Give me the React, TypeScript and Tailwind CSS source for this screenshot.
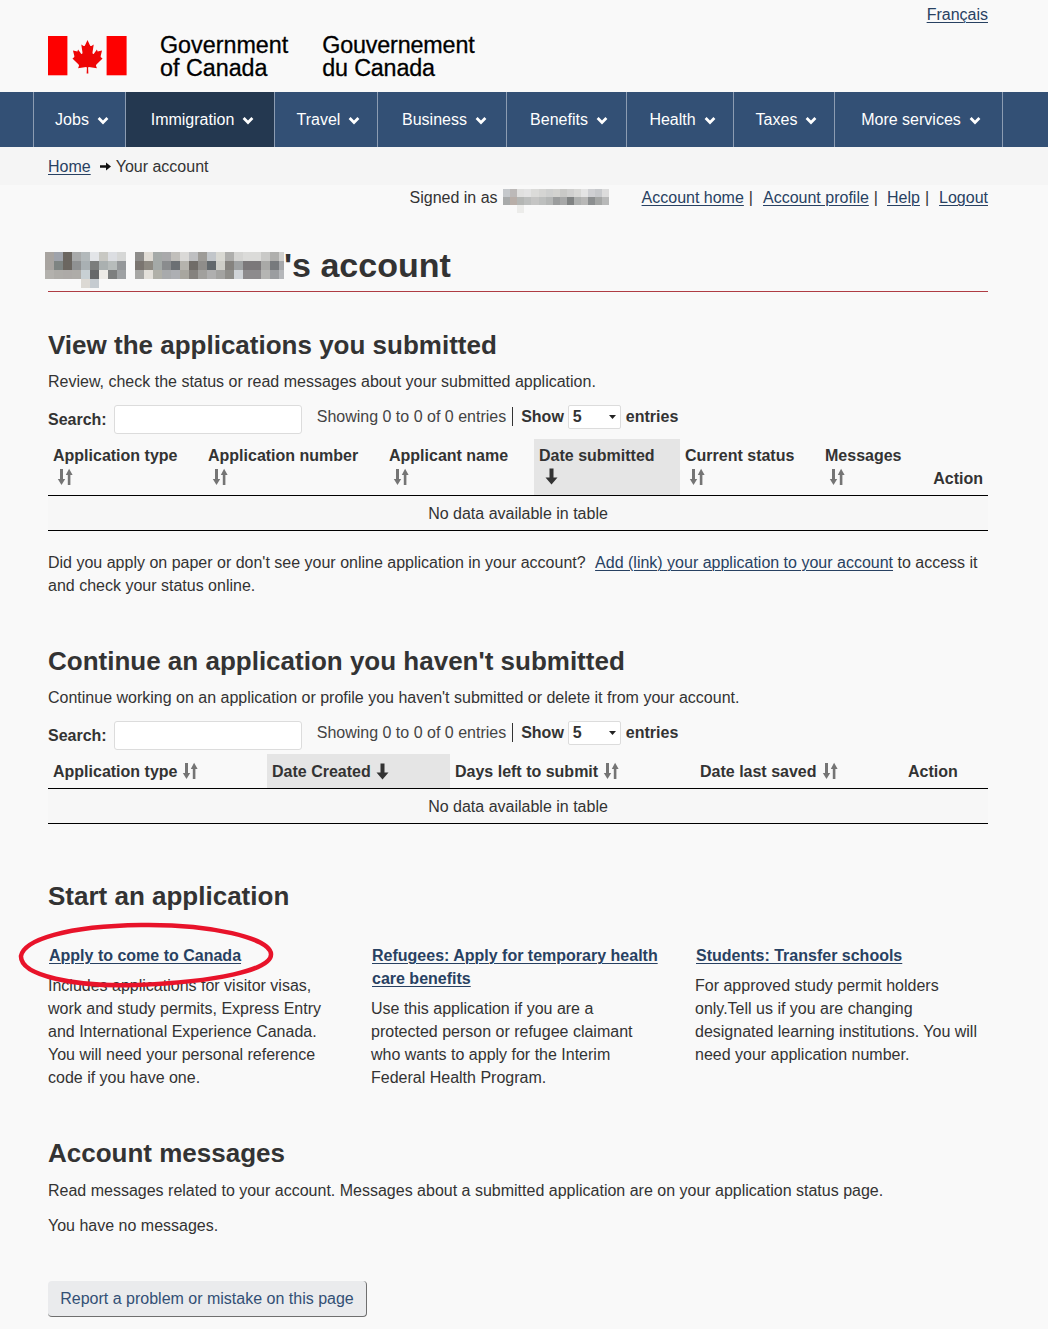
import React from "react";

const titleRows = [
  ["#a8a4a0","#9fa3ab","#6b6660","#a8aaaa","#b3b9bb","#e3e5e8","#c8c8c3","#dcdee2","#d6d7d6","#f9f9f9","#8e8d8b","#e0dcd5","#a5aaa8","#a9a9ab","#c1bfbb","#dad9d7","#bebfc1","#9e9c98","#c2c6ca","#d9d9d3","#aeaeac","#d4d4d2","#dbdbd9","#dbdbd9","#c9c9c7","#afafad","#cfcfcd"],
  ["#a8a4a0","#7e8482","#6b6660","#8f9192","#a9b0b3","#7b7d7c","#aab0b0","#b7bcbb","#95989a","#f9f9f9","#7a7570","#8e8a82","#a4a9a7","#8a8c8e","#6c7074","#b5b3ad","#706c68","#8f8d8a","#62686c","#cecec8","#85837f","#9fa2a3","#7b787a","#7b787a","#a9a9a7","#777a7d","#a5a7aa"],
  ["#b3b1ad","#aeaca8","#adaaa7","#aeaca8","#c8d0d4","#66686a","#eceae6","#7d7f7f","#9ea1a3","#f9f9f9","#a7a7a5","#e3e0da","#b0b0a8","#a8aaac","#adafb3","#a8a69f","#85827e","#a1a09d","#afafaf","#a3a3a1","#8f8e8a","#d0d4d8","#8d8b8d","#8d8b8d","#b5b5b3","#9b9da0","#b5b7ba"],
  ["#f9f9f9","#f9f9f9","#f9f9f9","#f9f9f9","#dcd9d4","#c5cbd0"],
];
const signedRows = [
  ["#c5c8cb","#bcb9b8","#e0e0df","#e3e3e3","#dbdbd9","#d5d5d3","#cfd0cf","#d3d3d0","#c9c9c7","#d0d0cf","#d8d8d6","#e4e4e4","#cfd0d3","#c7c9cc","#dcdcdc"],
  ["#a8aaaa","#b8aea8","#b4b6b4","#bcbebd","#c5c5c4","#bdbfbe","#b5b7b6","#9b9d9d","#a7a8a8","#808383","#aeb0af","#b8b8b7","#8c8f90","#a4a6a5","#b8b9b9"],
  ["#f9f9f9","#f9f9f9","#ececea"],
];

function Mosaic({ rows, cw, ch, w, h, className }: { rows: string[][]; cw: number; ch: number; w: number; h: number; className?: string }) {
  return (
    <svg width={w} height={h} viewBox={`0 0 ${w} ${h}`} shapeRendering="crispEdges" className={className}>
      {rows.flatMap((r, y) => r.map((c, x) => <rect key={`${x}-${y}`} x={x * cw} y={y * ch} width={cw} height={ch} fill={c} />))}
    </svg>
  );
}

function Chevron() {
  return (
    <svg width="12" height="10" viewBox="0 0 12 10" className="mt-[1px] shrink-0">
      <path d="M1.6 3 L6 7.4 L10.4 3" fill="none" stroke="#fff" strokeWidth="2.8" />
    </svg>
  );
}

function SortIcon({ className = "" }: { className?: string }) {
  return (
    <svg width="17" height="18" viewBox="0 0 17 18" className={`shrink-0 ${className}`} fill="#757575">
      <path d="M3 1h3v10h2.2L4.5 17 0.8 11H3z" />
      <path d="M13.4 17h-2.6V7H8.8l3.3-6.2L15.6 7h-2.2z" />
    </svg>
  );
}

function DownIcon({ className = "" }: { className?: string }) {
  return (
    <svg width="13" height="17" viewBox="0 0 13 17" className={`shrink-0 ${className}`} fill="#333">
      <path d="M4.5 0.5h4V9.5H12.5L6.5 16.5 0.5 9.5H4.5z" />
    </svg>
  );
}

const navItems: [string, string, boolean][] = [
  ["Jobs", "w-[92px]", false],
  ["Immigration", "w-[149px]", true],
  ["Travel", "w-[103px]", false],
  ["Business", "w-[129px]", false],
  ["Benefits", "w-[120px]", false],
  ["Health", "w-[107px]", false],
  ["Taxes", "w-[101px]", false],
  ["More services", "w-[168px]", false],
];

function Link({ children, className = "" }: { children: React.ReactNode; className?: string }) {
  return <a className={`text-[#284162] underline decoration-1 underline-offset-[2px] ${className}`}>{children}</a>;
}

function TableControls() {
  return (
    <div className="flex items-start h-[34px]">
      <label className="font-bold mt-[3px]">Search:</label>
      <input className="ml-[7px] w-[188px] h-[29px] bg-white border border-[#dcdcdc] rounded-[3px]" readOnly />
      <span className="ml-[15px] mt-0 text-[#444]">Showing 0 to 0 of 0 entries</span>
      <span className="ml-[6px] mr-[8px] w-px h-[19px] mt-[2px] bg-[#333]" />
      <b>Show</b>
      <div className="ml-[4px] w-[53px] h-[24px] bg-white border border-[#dcdcdc] rounded-[2px] flex items-center justify-between pl-[4px] pr-[4px] font-bold leading-none">
        5
        <svg width="7" height="4" viewBox="0 0 7 4"><path d="M0 0h7L3.5 4z" fill="#222" /></svg>
      </div>
      <b className="ml-[5px]">entries</b>
    </div>
  );
}

function Section({ title, className = "" }: { title: string; className?: string }) {
  return <h2 className={`font-bold text-[26px] leading-[32px] text-[#333] ${className}`}>{title}</h2>;
}

function NoData() {
  return (
    <div className="h-[36px] border-t border-b border-black text-center flex items-center justify-center bg-[#f7f7f7]">
      No data available in table
    </div>
  );
}

const cols1: [string, string][] = [
  ["Application type", "w-[155px]"],
  ["Application number", "w-[181px]"],
  ["Applicant name", "w-[150px]"],
  ["Date submitted", "w-[146px] bg-[#e5e5e5]"],
  ["Current status", "w-[140px]"],
  ["Messages", "w-[107px]"],
];

export default function App() {
  return (
    <div className="relative h-[1329px] w-[1048px] overflow-hidden bg-[#f9f9f9] text-[16px] leading-[23px] text-[#333] font-['Liberation_Sans',Arial,sans-serif]">
      {/* Header */}
      <header className="h-[92px] pl-[48px] w-[988px]">
        <div className="flex justify-end pt-[3px]"><Link>Français</Link></div>
        <div className="flex mt-[10px]">
          <svg width="79" height="40" viewBox="0 0 79 40" className="shrink-0">
            <rect x="0" y="0" width="19.4" height="39.3" fill="#fe0000" />
            <rect x="58.6" y="0" width="20" height="39.3" fill="#fe0000" />
            <path transform="translate(39.5 0) scale(0.85 1) translate(-39.5 0)" fill="#ee0505" d="M39.5 4 L42.5 9.5 C43 10.2 43.8 10.2 44.6 9.8 L46.8 8.6 L45.4 16.6 C45.2 18 46.4 18.4 47.2 17.4 L50.6 13.4 L51.4 15.4 L56.6 14.4 L55 20 C54.8 20.8 55 21.2 55.6 21.6 L57.2 22.4 L50 28.4 C49.4 29 49.4 29.6 49.8 30.4 L50.6 32.2 L41.2 31 C40.6 31 40.2 31.4 40.2 32 L40.5 37.5 L38.5 37.5 L38.8 32 C38.8 31.4 38.4 31 37.8 31 L28.4 32.2 L29.2 30.4 C29.6 29.6 29.6 29 29 28.4 L21.8 22.4 L23.4 21.6 C24 21.2 24.2 20.8 24 20 L22.4 14.4 L27.6 15.4 L28.4 13.4 L31.8 17.4 C32.6 18.4 33.8 18 33.6 16.6 L32.2 8.6 L34.4 9.8 C35.2 10.2 36 10.2 36.5 9.5 Z" />
          </svg>
          <div className="ml-[33px] text-[23.3px] leading-[23px] text-black [-webkit-text-stroke:0.3px_black] -mt-[2px]">Government<br />of Canada</div>
          <div className="ml-[34px] text-[23.3px] leading-[23px] tracking-[-0.15px] text-black [-webkit-text-stroke:0.3px_black] -mt-[2px]">Gouvernement<br />du Canada</div>
        </div>
      </header>

      {/* Main nav */}
      <nav className="h-[55px] bg-[#335075] flex pl-[33px] text-white">
        {navItems.map(([label, w, active]) => (
          <div key={label} className={`${w} h-full border-l border-[#8c9cb2] flex items-center justify-center gap-[8px] pl-[5px] ${active ? "bg-[#243850]" : ""}`}>
            <span>{label}</span>
            <Chevron />
          </div>
        ))}
        <div className="h-full border-l border-[#8c9cb2]" />
      </nav>

      {/* Breadcrumb */}
      <div className="h-[38px] bg-[#f5f5f5] pl-[48px] flex items-center gap-[9px]">
        <Link>Home</Link>
        <svg width="11" height="9" viewBox="0 0 11 9"><path d="M0 3.2h6V0.5L11 4.5 6 8.5V5.8H0z" fill="#111" /></svg>
        <span className="-ml-[4px]">Your account</span>
      </div>

      <main className="pl-[48px] w-[988px]">
        {/* Account links */}
        <div className="flex justify-end items-start mt-px h-[23px]">
          <span>Signed in as</span>
          <Mosaic rows={signedRows} cw={7.1} ch={8} w={106} h={24} className="ml-[5px] mt-[3px] shrink-0" />
          <Link className="ml-[33px]">Account home</Link>
          <span className="ml-[5px]">|</span>
          <Link className="ml-[10px]">Account profile</Link>
          <span className="ml-[5px]">|</span>
          <Link className="ml-[9px]">Help</Link>
          <span className="ml-[5px]">|</span>
          <Link className="ml-[10px]">Logout</Link>
        </div>

        {/* Title */}
        <h1 className="mt-[36px] h-[47px] flex items-start border-b border-[#af3c43] font-bold text-[34px] leading-[40px]">
          <Mosaic rows={titleRows} cw={9} ch={9} w={239} h={36} className="-ml-[3px] mt-[7px] shrink-0" />
          <span>'s account</span>
        </h1>

        {/* Submitted */}
        <Section title="View the applications you submitted" className="mt-[37px]" />
        <p className="mt-[9px]">Review, check the status or read messages about your submitted application.</p>
        <div className="mt-[12px]"><TableControls /></div>
        <div className="flex h-[56px] font-bold">
          {cols1.map(([label, w]) => (
            <div key={label} className={`${w} pl-[5px] pt-[5px]`}>
              <div>{label}</div>
              {label === "Date submitted"
                ? <DownIcon className="ml-[6px] mt-[1px]" />
                : <SortIcon className="ml-[4px] mt-[1px]" />}
            </div>
          ))}
          <div className="flex-1 flex items-end justify-end pr-[5px] pb-[5px]">Action</div>
        </div>
        <NoData />
        <p className="mt-[20px]">
          Did you apply on paper or don't see your online application in your account?{" "}
          <Link className="ml-[5px]">Add (link) your application to your account</Link> to access it<br />and check your status online.
        </p>

        {/* Unsubmitted */}
        <Section title="Continue an application you haven't submitted" className="mt-[48px]" />
        <p className="mt-[9px]">Continue working on an application or profile you haven't submitted or delete it from your account.</p>
        <div className="mt-[12px]"><TableControls /></div>
        <div className="flex h-[34px] -mt-px font-bold items-stretch">
          <div className="w-[219px] pl-[5px] flex items-center gap-[5px]">Application type <SortIcon /></div>
          <div className="w-[183px] pl-[5px] flex items-center gap-[5px] bg-[#e5e5e5]">Date Created <DownIcon /></div>
          <div className="w-[245px] pl-[5px] flex items-center gap-[5px]">Days left to submit <SortIcon /></div>
          <div className="w-[208px] pl-[5px] flex items-center gap-[5px]">Date last saved <SortIcon /></div>
          <div className="flex-1 pl-[5px] flex items-center">Action</div>
        </div>
        <NoData />

        {/* Start */}
        <Section title="Start an application" className="mt-[56px]" />
        <div className="mt-[32px] grid grid-cols-[290px_290px_290px] gap-x-[33px]">
          <div>
            <h3 className="font-bold ml-px"><Link>Apply to come to Canada</Link></h3>
            <p className="mt-[7px]">Includes applications for visitor visas, work and study permits, Express Entry and International Experience Canada. You will need your personal reference code if you have one.</p>
          </div>
          <div>
            <h3 className="font-bold ml-px"><Link>Refugees: Apply for temporary health care benefits</Link></h3>
            <p className="mt-[7px]">Use this application if you are a protected person or refugee claimant who wants to apply for the Interim Federal Health Program.</p>
          </div>
          <div>
            <h3 className="font-bold ml-[2px]"><Link>Students: Transfer schools</Link></h3>
            <p className="mt-[7px] ml-px">For approved study permit holders only.Tell us if you are changing designated learning institutions. You will need your application number.</p>
          </div>
        </div>

        {/* Messages */}
        <Section title="Account messages" className="mt-[48px]" />
        <p className="mt-[10px]">Read messages related to your account. Messages about a submitted application are on your application status page.</p>
        <p className="mt-[12px]">You have no messages.</p>

        <button className="mt-[44px] h-[36px] w-[319px] bg-[#eaebed] text-[#335075] rounded-[4px] border-r border-b border-[#6f6f6f] text-center">
          Report a problem or mistake on this page
        </button>
      </main>

      {/* Hand-drawn annotation over the page */}
      <svg className="absolute left-[16px] top-[920px] pointer-events-none" width="260" height="72" viewBox="0 0 260 72" fill="none">
        <path d="M5 36 C8 20 50 6 125 5 C195 4 254 18 255 34 C256 50 200 62 120 65 C60 67 4 56 5 36 Z" stroke="#e8132a" strokeWidth="4.5" />
      </svg>
    </div>
  );
}
